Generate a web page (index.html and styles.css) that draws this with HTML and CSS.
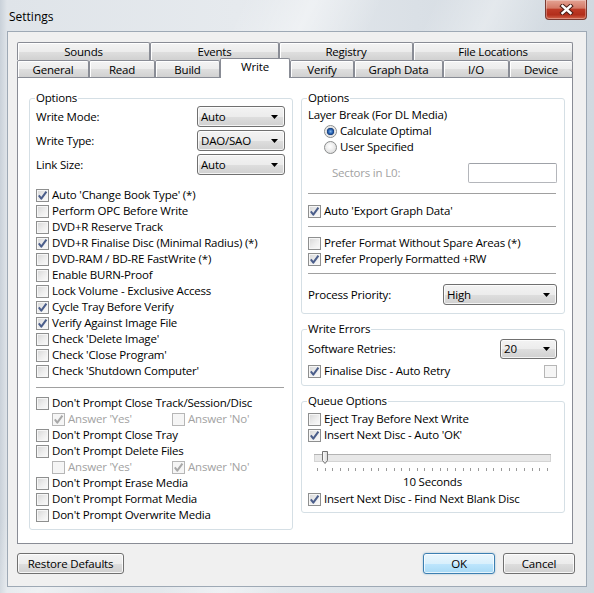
FILE: index.html
```html
<!DOCTYPE html>
<html>
<head>
<meta charset="utf-8">
<title>Settings</title>
<link rel="stylesheet" href="styles.css">
</head>
<body>
<svg class="defs" width="0" height="0" aria-hidden="true">
  <defs>
    <symbol id="chk" viewBox="0 0 11 11"><path d="M1.8 5.4 L4.3 8.6 L9.4 1.6" fill="none" stroke="currentColor" stroke-width="2" stroke-linejoin="round"/></symbol>
    <symbol id="arrow" viewBox="0 0 7 4"><path d="M0 0 H7 L3.5 4 Z" fill="#000"/></symbol>
  </defs>
</svg>
<div class="window">
  <div class="titlebar">
    <span class="title">Settings</span>
    <div class="close">
      <svg width="15" height="11" viewBox="0 0 15 11"><path d="M3.5 2 L11.5 9 M11.5 2 L3.5 9" stroke="#4a1e17" stroke-width="4.4" stroke-linecap="square"/><path d="M3.5 2 L11.5 9 M11.5 2 L3.5 9" stroke="#fff" stroke-width="2.4" stroke-linecap="square"/></svg>
    </div>
  </div>
  <div class="client">
    <div class="tabs">
      <div class="tabrow back">
        <div class="tab">Sounds</div>
        <div class="tab">Events</div>
        <div class="tab">Registry</div>
        <div class="tab">File Locations</div>
      </div>
      <div class="tabrow front">
        <div class="tab">General</div>
        <div class="tab">Read</div>
        <div class="tab">Build</div>
        <div class="tab active">Write</div>
        <div class="tab">Verify</div>
        <div class="tab">Graph Data</div>
        <div class="tab">I/O</div>
        <div class="tab">Device</div>
      </div>
    </div>
    <div class="pane">
      <div class="col">
        <fieldset class="group g-left">
          <legend>Options</legend>
          <div class="field"><span>Write Mode:</span><div class="select w88"><span>Auto</span><svg class="arr"><use href="#arrow"/></svg></div></div>
          <div class="field"><span>Write Type:</span><div class="select w88"><span>DAO/SAO</span><svg class="arr"><use href="#arrow"/></svg></div></div>
          <div class="field"><span>Link Size:</span><div class="select w88"><span>Auto</span><svg class="arr"><use href="#arrow"/></svg></div></div>
          <div class="list">
            <div class="cb"><span class="box"><svg><use href="#chk"/></svg></span>Auto 'Change Book Type' (*)</div>
            <div class="cb"><span class="box"></span>Perform OPC Before Write</div>
            <div class="cb"><span class="box"></span>DVD+R Reserve Track</div>
            <div class="cb"><span class="box"><svg><use href="#chk"/></svg></span>DVD+R Finalise Disc (Minimal Radius) (*)</div>
            <div class="cb"><span class="box"></span>DVD-RAM / BD-RE FastWrite (*)</div>
            <div class="cb"><span class="box"></span>Enable BURN-Proof</div>
            <div class="cb"><span class="box"></span>Lock Volume - Exclusive Access</div>
            <div class="cb"><span class="box"><svg><use href="#chk"/></svg></span>Cycle Tray Before Verify</div>
            <div class="cb"><span class="box"><svg><use href="#chk"/></svg></span>Verify Against Image File</div>
            <div class="cb"><span class="box"></span>Check 'Delete Image'</div>
            <div class="cb"><span class="box"></span>Check 'Close Program'</div>
            <div class="cb"><span class="box"></span>Check 'Shutdown Computer'</div>
          </div>
          <div class="sep s-left"></div>
          <div class="list">
            <div class="cb"><span class="box"></span>Don't Prompt Close Track/Session/Disc</div>
            <div class="ans">
              <div class="cb dim"><span class="box dis"><svg><use href="#chk"/></svg></span>Answer 'Yes'</div>
              <div class="cb dim"><span class="box dis"></span>Answer 'No'</div>
            </div>
            <div class="cb"><span class="box"></span>Don't Prompt Close Tray</div>
            <div class="cb"><span class="box"></span>Don't Prompt Delete Files</div>
            <div class="ans">
              <div class="cb dim"><span class="box dis"></span>Answer 'Yes'</div>
              <div class="cb dim"><span class="box dis"><svg><use href="#chk"/></svg></span>Answer 'No'</div>
            </div>
            <div class="cb"><span class="box"></span>Don't Prompt Erase Media</div>
            <div class="cb"><span class="box"></span>Don't Prompt Format Media</div>
            <div class="cb"><span class="box"></span>Don't Prompt Overwrite Media</div>
          </div>
        </fieldset>
      </div>
      <div class="col">
        <fieldset class="group g-opts">
          <legend>Options</legend>
          <div class="text-row">Layer Break (For DL Media)</div>
          <div class="cb radio-row"><span class="radio on"></span>Calculate Optimal</div>
          <div class="cb radio-row"><span class="radio"></span>User Specified</div>
          <div class="sectors"><span class="dim">Sectors in L0:</span><div class="input"></div></div>
          <div class="sep s-a"></div>
          <div class="cb"><span class="box"><svg><use href="#chk"/></svg></span>Auto 'Export Graph Data'</div>
          <div class="sep s-b"></div>
          <div class="cb"><span class="box"></span>Prefer Format Without Spare Areas (*)</div>
          <div class="cb"><span class="box"><svg><use href="#chk"/></svg></span>Prefer Properly Formatted +RW</div>
          <div class="sep s-c"></div>
          <div class="field f-last"><span>Process Priority:</span><div class="select w114"><span>High</span><svg class="arr"><use href="#arrow"/></svg></div></div>
        </fieldset>
        <fieldset class="group g-err">
          <legend>Write Errors</legend>
          <div class="field f-retry"><span>Software Retries:</span><div class="select w57"><span>20</span><svg class="arr"><use href="#arrow"/></svg></div></div>
          <div class="split">
            <div class="cb"><span class="box"><svg><use href="#chk"/></svg></span>Finalise Disc - Auto Retry</div>
            <span class="box dis"></span>
          </div>
        </fieldset>
        <fieldset class="group g-queue">
          <legend>Queue Options</legend>
          <div class="cb first"><span class="box"></span>Eject Tray Before Next Write</div>
          <div class="cb"><span class="box"><svg><use href="#chk"/></svg></span>Insert Next Disc - Auto 'OK'</div>
          <svg class="slider" width="250" height="31" viewBox="0 0 250 31">
            <defs>
              <linearGradient id="thumbg" x1="0" y1="0" x2="1" y2="0">
                <stop offset="0" stop-color="#fdfdfd"/>
                <stop offset="1" stop-color="#d8d8d8"/>
              </linearGradient>
            </defs>
            <rect x="6.5" y="11.5" width="236" height="7" fill="#e8e8e8" stroke="#d4d4d4"/>
            <path d="M6 11.5 H243" stroke="#b4b4b4"/>
            <path d="M14.5 8.5 H19.5 V17.5 L17 20.5 L14.5 17.5 Z" fill="url(#thumbg)" stroke="#737373"/>
            <path d="M9.5 25v3M17.5 25v3M24.5 25v3M32.5 25v3M40.5 25v3M47.5 25v3M55.5 25v3M63.5 25v3M70.5 25v3M78.5 25v3M86.5 25v3M93.5 25v3M101.5 25v3M109.5 25v3M116.5 25v3M124.5 25v3M132.5 25v3M139.5 25v3M147.5 25v3M155.5 25v3M162.5 25v3M170.5 25v3M178.5 25v3M185.5 25v3M193.5 25v3M201.5 25v3M208.5 25v3M216.5 25v3M224.5 25v3M231.5 25v3M239.5 25v3" stroke="#9a9a9a"/>
          </svg>
          <div class="center-row">10 Seconds</div>
          <div class="cb last"><span class="box"><svg><use href="#chk"/></svg></span>Insert Next Disc - Find Next Blank Disc</div>
        </fieldset>
      </div>
    </div>
    <div class="footer">
      <div class="btn b-restore">Restore Defaults</div>
      <div class="spacer"></div>
      <div class="btn b-ok">OK</div>
      <div class="btn b-cancel">Cancel</div>
    </div>
  </div>
</div>
</body>
</html>
```
FILE: styles.css
```css
* { box-sizing: border-box; }
html, body { margin: 0; padding: 0; }
body {
  background: #dfe4e9;
  font-family: "Open Sans", "Noto Sans", "DejaVu Sans", sans-serif;
  font-size: 11.5px;
  letter-spacing: -0.2px;
  line-height: 16px;
  color: #000;
}
.defs { position: absolute; width: 0; height: 0; overflow: hidden; }

.window {
  width: 594px;
  height: 593px;
  display: flex;
  flex-direction: column;
  overflow: hidden;
  background:
    linear-gradient(115deg, rgba(255,255,255,0) 28%, rgba(255,255,255,.45) 36%, rgba(255,255,255,0) 44%, rgba(255,255,255,0) 50%, rgba(255,255,255,.35) 57%, rgba(255,255,255,0) 64%),
    linear-gradient(to right, #c9d1d9 0, #dfe4e9 7px, #e6eaee 40%, #dae0e6 70%, #d1d9e0 100%);
}

.titlebar {
  height: 31px;
  flex: none;
  display: flex;
  justify-content: space-between;
  align-items: flex-start;
  padding: 0 7px 0 9px;
}
.title { font-size: 12px; letter-spacing: 0; margin-top: 9px; line-height: 16px; }
.close {
  width: 42px;
  height: 20px;
  border: 1px solid #7a3a31;
  border-top: none;
  border-radius: 0 0 4px 4px;
  background: linear-gradient(#e4a393 0%, #d47a67 42%, #bd3a26 50%, #b22e1b 78%, #d2654b 100%);
  box-shadow: inset 0 0 0 1px rgba(255,255,255,.3);
  display: flex;
  align-items: center;
  justify-content: center;
}

.client {
  flex: none;
  height: 556px;
  margin: 0 7px 6px;
  border: 1px solid #9ea9b5;
  background: #f0f0f0;
  padding: 10px 13px 0 9px;
  display: flex;
  flex-direction: column;
}

/* tabs */
.tabs { display: flex; flex-direction: column; flex: none; }
.tabrow { display: flex; }
.back { height: 18px; }
.front { height: 17px; }
.tab {
  border: 1px solid #898c95;
  border-bottom: none;
  border-radius: 2px 2px 0 0;
  background: linear-gradient(#f4f4f4 0%, #ececec 50%, #dfdfdf 51%, #d1d1d1 100%);
  box-shadow: inset 1px 1px 0 #fff;
  display: flex;
  align-items: center;
  justify-content: center;
  padding-top: 1px;
}
.back .tab:nth-child(1) { width: 133px; }
.back .tab:nth-child(2) { width: 129px; }
.back .tab:nth-child(3) { width: 134px; }
.back .tab:nth-child(4) { width: 160px; }
.front .tab:nth-child(1) { width: 72px; }
.front .tab:nth-child(2) { width: 66px; }
.front .tab:nth-child(3) { width: 65px; }
.front .tab:nth-child(4) { width: 70px; }
.front .tab:nth-child(5) { width: 64px; }
.front .tab:nth-child(6) { width: 89px; }
.front .tab:nth-child(7) { width: 66px; }
.front .tab:nth-child(8) { width: 64px; }
.tab.active {
  position: relative;
  z-index: 1;
  background: #fff;
  box-shadow: none;
  margin-top: -2px;
  height: 20px;
  padding: 0 0 3px;
}

/* pane */
.pane {
  flex: none;
  height: 467px;
  border: 1px solid #898c95;
  background: #fff;
  padding: 12px 7px 0 11px;
  display: flex;
  gap: 8px;
}
.col { width: 264px; display: flex; flex-direction: column; }

.group {
  margin: 0;
  padding: 0 7px 6px 6px;
  border: 1px solid #d5dfe5;
  border-radius: 3px;
  min-width: 0;
}
.group legend { padding: 0 1px; margin-left: -1px; line-height: 16px; }
.g-opts { padding-bottom: 8px; }
.g-err { margin-top: 7px; }
.g-queue { margin-top: 7px; padding-bottom: 5px; }

.field {
  display: flex;
  align-items: center;
  justify-content: space-between;
  height: 21px;
  margin-bottom: 3px;
}
.f-last { margin-bottom: 0; }
.select {
  height: 21px;
  border: 1px solid #707070;
  border-radius: 3px;
  background: linear-gradient(#f3f3f3 0%, #ececec 50%, #dedede 51%, #d0d0d0 100%);
  box-shadow: inset 0 0 0 1px rgba(255,255,255,.75);
  display: flex;
  align-items: center;
  justify-content: space-between;
  padding: 0 6px 0 3px;
}
.w88 { width: 88px; }
.w114 { width: 114px; }
.w57 { width: 57px; }
.arr { width: 7px; height: 4px; }

.list { margin-top: 12px; }
.sep { border-top: 1px solid #a0a0a0; }
.s-left { margin: 8px 1px 7px 0; }
.s-left + .list { margin-top: 0; }
.s-a { margin: 10px 1px 9px 0; }
.s-b { margin: 7px 1px 8px 0; }
.s-c { margin: 6px 1px 10px 0; }

.cb { display: flex; align-items: center; height: 16px; white-space: nowrap; }
.box {
  flex: none;
  width: 13px;
  height: 13px;
  margin-right: 3px;
  border: 1px solid #8e8f8f;
  background: linear-gradient(135deg, #d6d6d6 0%, #eeeeee 55%, #fbfbfb 100%);
  box-shadow: inset 0 0 0 1px #f6f6f6;
  color: #4b5e8b;
  display: flex;
  align-items: center;
  justify-content: center;
}
.box svg { width: 11px; height: 11px; display: block; }
.box.dis { border-color: #b6b6b6; background: #f5f5f5; color: #a8a8a8; }
.dim { color: #a2a2a2; }
.ans { display: flex; height: 16px; padding-left: 16px; }
.ans .cb:first-child { width: 120px; }

.text-row { height: 17px; display: flex; align-items: center; }
.radio-row { padding-left: 16px; }
.radio {
  flex: none;
  width: 13px;
  height: 13px;
  margin-right: 3px;
  border-radius: 50%;
  border: 1px solid #8a8c8c;
  background: radial-gradient(circle at 45% 40%, #ffffff 0, #f1f1f1 35%, #d3d3d3 100%);
}
.radio.on {
  background: radial-gradient(circle at 50% 50%, #7fb4ea 0, #2f69b8 2px, #163d7a 3.4px, #dcdcdc 4px, #f4f4f4 5.5px);
}
.sectors {
  display: flex;
  justify-content: space-between;
  align-items: center;
  height: 20px;
  margin-top: 8px;
  padding-left: 24px;
}
.input {
  width: 89px;
  height: 20px;
  border: 1px solid #b4b6bb;
  border-top-color: #9fa2a8;
  border-radius: 2px;
  background: #fff;
}

.f-retry { height: 20px; margin: 2px 0 4px; }
.f-retry .select { height: 20px; }
.split { display: flex; justify-content: space-between; align-items: center; height: 16px; }
.split > .box { margin-right: 0; }

.first { margin-top: 2px; }
.slider { display: block; }
.center-row { height: 16px; text-align: center; }
.last { margin-top: 1px; }

/* footer */
.footer { display: flex; margin-top: 9px; margin-right: -2px; gap: 8px; }
.spacer { flex: 1; }
.btn {
  height: 21px;
  border: 1px solid #707070;
  border-radius: 3px;
  background: linear-gradient(#f3f3f3 0%, #ececec 50%, #dedede 51%, #d0d0d0 100%);
  box-shadow: inset 0 0 0 1px rgba(255,255,255,.8);
  display: flex;
  align-items: center;
  justify-content: center;
}
.b-restore { width: 107px; }
.b-ok {
  width: 72px;
  border-color: #3c7fb1;
  background: linear-gradient(#eaf6fd 0%, #d9f0fc 50%, #bee6fd 51%, #a7d9f5 100%);
  box-shadow: inset 0 0 0 1px rgba(255,255,255,.7), 0 0 2px rgba(60,127,177,.5);
}
.b-cancel { width: 72px; }
```
